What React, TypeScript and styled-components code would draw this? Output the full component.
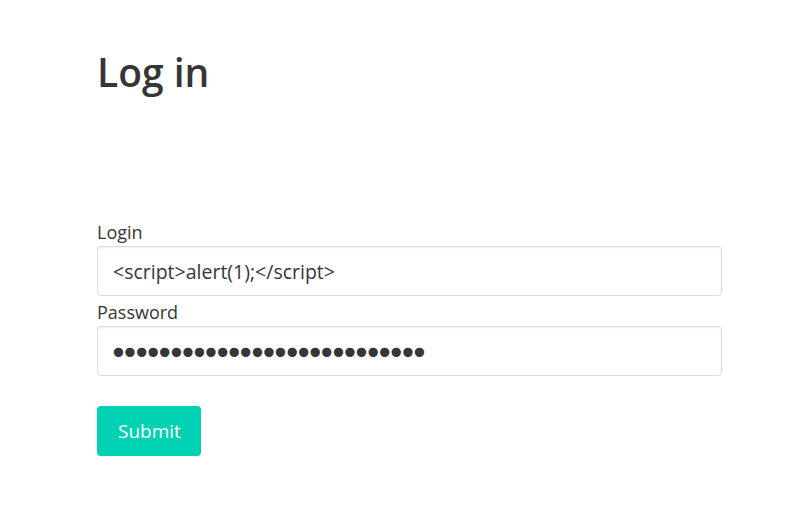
import React from "react";
import styled, { createGlobalStyle } from "styled-components";

const Global = createGlobalStyle`
  html, body { margin: 0; padding: 0; background: #fff; }
  body { font-family: "Open Sans", "Noto Sans", sans-serif; color: #363636; }
  * { box-sizing: border-box; }
`;

const Page = styled.main`
  padding: 48px 0 0 97px;
  width: 722px;
`;

const Title = styled.h1`
  margin: 0;
  font-size: 39px;
  font-weight: 600;
  line-height: 48px;
  color: #363636;
`;

const Form = styled.form`
  margin-top: 120px;
  display: flex;
  flex-direction: column;
`;

const Field = styled.div`
  display: flex;
  flex-direction: column;
`;

const Label = styled.label`
  font-size: 18px;
  line-height: 27px;
  padding-top: 3px;
  color: #363636;
`;

const Input = styled.input<{ $masked?: boolean }>`
  height: 50px;
  width: 100%;
  border: 1px solid #dbdbdb;
  border-radius: 4px;
  padding: ${(p) => (p.$masked ? "3px 15px 0 11px" : "0 15px")};
  font-family: ${(p) => (p.$masked ? '"DejaVu Sans", sans-serif' : '"Open Sans", sans-serif')};
  font-size: ${(p) => (p.$masked ? "32px" : "19.5px")};
  letter-spacing: ${(p) => (p.$masked ? "-7.3px" : "normal")};
  color: #363636;
  box-shadow: inset 0 1px 2px rgba(10, 10, 10, 0.05);
  outline: none;
`;

const Actions = styled.div`
  margin-top: 30px;
`;

const Button = styled.button`
  height: 50px;
  padding: 0 20px 0 21px;
  background: #00d1b2;
  color: #fff;
  border: none;
  border-radius: 4px;
  font-family: "Open Sans", sans-serif;
  font-size: 19px;
  cursor: pointer;
`;

export default function App() {
  return (
    <>
      <Global />
      <Page>
        <Title>Log in</Title>
        <Form onSubmit={(e) => e.preventDefault()}>
          <Field>
            <Label htmlFor="login">Login</Label>
            <Input id="login" type="text" defaultValue="<script>alert(1);</script>" />
          </Field>
          <Field>
            <Label htmlFor="password">Password</Label>
            <Input $masked id="password" type="password" defaultValue="abcdefghijklmnopqrstuvwxyz1" />
          </Field>
          <Actions>
            <Button type="submit">Submit</Button>
          </Actions>
        </Form>
      </Page>
    </>
  );
}
